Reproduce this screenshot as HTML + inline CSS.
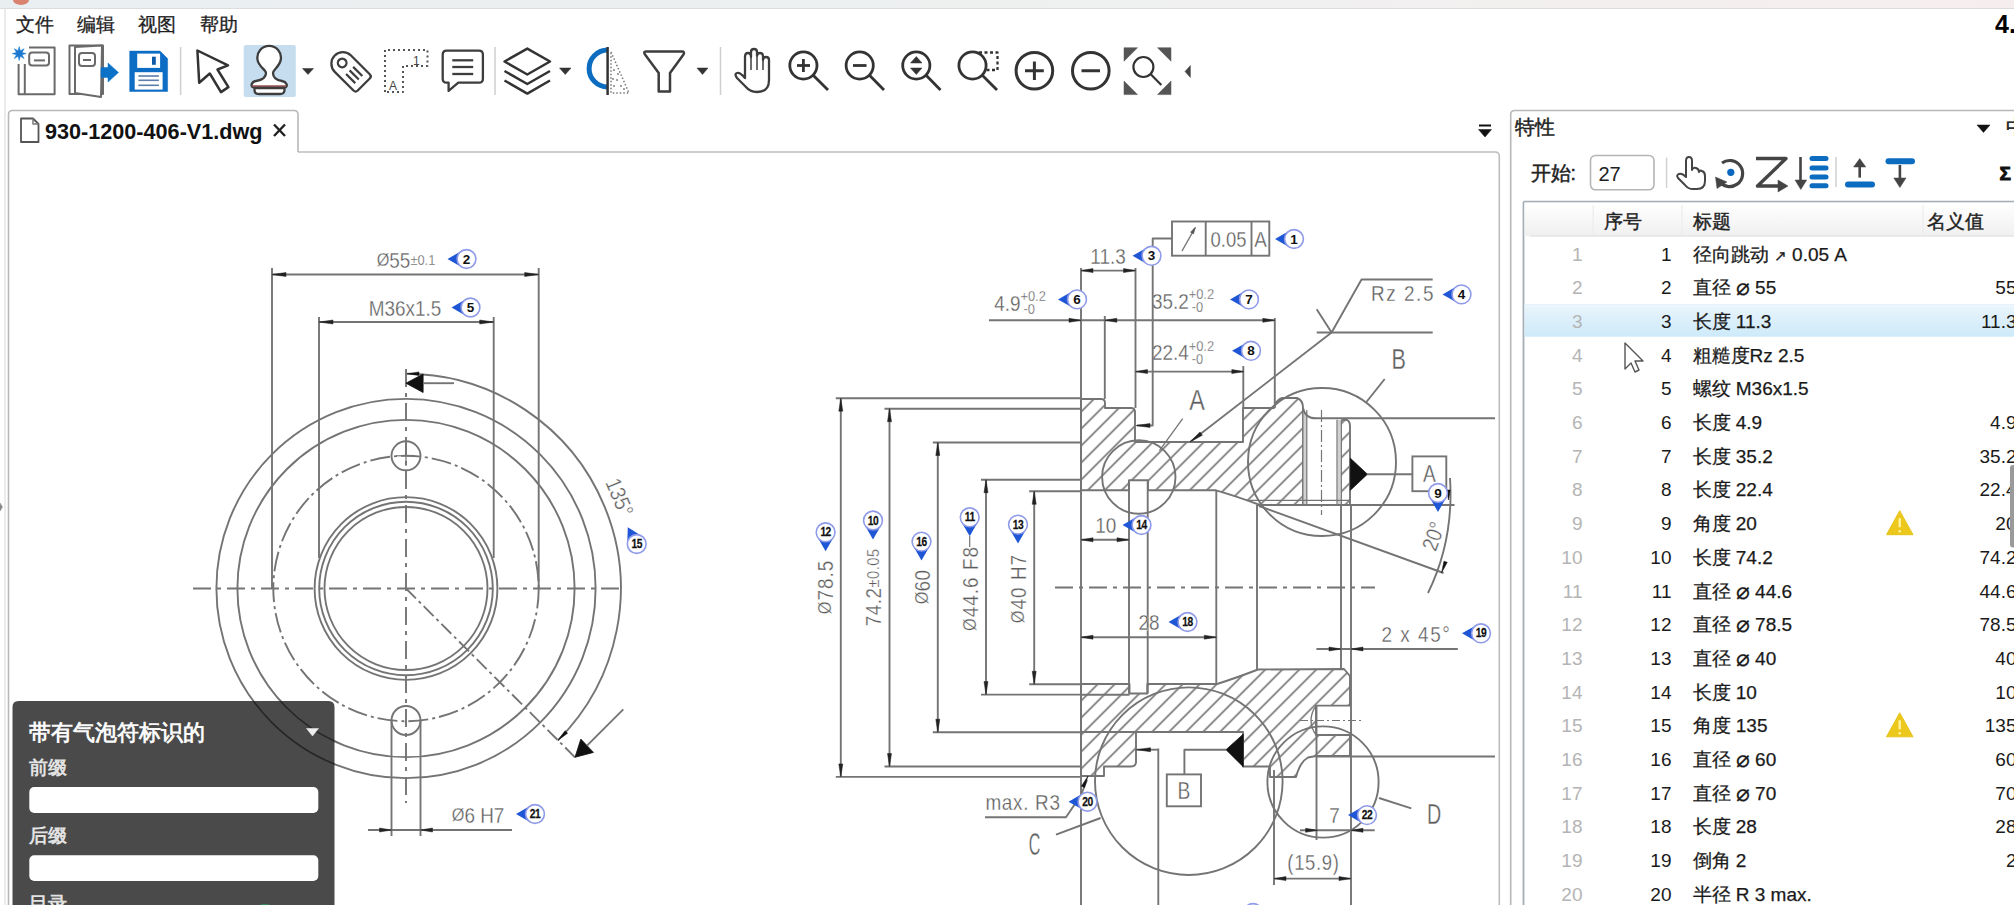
<!DOCTYPE html>
<html><head><meta charset="utf-8">
<style>
html,body{margin:0;padding:0;width:2014px;height:905px;overflow:hidden;background:#fff;font-family:"Liberation Sans",sans-serif;}
svg{position:absolute;left:0;top:0;}
</style></head>
<body>
<svg width="2014" height="905" viewBox="0 0 2014 905">
<defs>
<pattern id="hatch" patternUnits="userSpaceOnUse" width="12.02" height="12.02" patternTransform="rotate(-45)">
<line x1="-2" y1="9.9" x2="14" y2="9.9" stroke="#727272" stroke-width="1.65"/>
</pattern>
<linearGradient id="topband" x1="0" y1="0" x2="1" y2="0">
<stop offset="0" stop-color="#e9eef0"/><stop offset="0.5" stop-color="#eef0f0"/><stop offset="1" stop-color="#f6eeee"/>
</linearGradient>
<linearGradient id="hdr" x1="0" y1="0" x2="0" y2="1">
<stop offset="0" stop-color="#ffffff"/><stop offset="1" stop-color="#f0f0f0"/>
</linearGradient>
<linearGradient id="sel" x1="0" y1="0" x2="0" y2="1">
<stop offset="0" stop-color="#f2f9fd"/><stop offset="0.15" stop-color="#e6f3fb"/><stop offset="1" stop-color="#cdeafa"/>
</linearGradient>
</defs>
<line x1="193" y1="588.5" x2="620" y2="588.5" stroke="#747474" stroke-width="1.9" stroke-dasharray="18 6 4 6" stroke-linecap="butt"/>
<line x1="406" y1="369" x2="406" y2="803" stroke="#747474" stroke-width="1.9" stroke-dasharray="18 6 4 6" stroke-linecap="butt"/>
<circle cx="406" cy="588.5" r="189.6" fill="none" stroke="#747474" stroke-width="1.9"/>
<circle cx="406" cy="588.5" r="168.6" fill="none" stroke="#747474" stroke-width="1.9"/>
<circle cx="406" cy="588.5" r="132.7" fill="none" stroke="#747474" stroke-width="1.9" stroke-dasharray="20 4 3 4"/>
<circle cx="406" cy="588.5" r="91.4" fill="none" stroke="#747474" stroke-width="1.9"/>
<circle cx="406" cy="588.5" r="86.8" fill="none" stroke="#747474" stroke-width="1.9"/>
<circle cx="406" cy="588.5" r="81.5" fill="none" stroke="#747474" stroke-width="1.9"/>
<circle cx="406" cy="455.8" r="14.5" fill="none" stroke="#747474" stroke-width="1.9"/>
<line x1="396" y1="455.8" x2="415" y2="455.8" stroke="#747474" stroke-width="1.2" stroke-linecap="butt"/>
<line x1="406" y1="446" x2="406" y2="466" stroke="#747474" stroke-width="1.2" stroke-linecap="butt"/>
<circle cx="406" cy="720.5" r="14.5" fill="none" stroke="#747474" stroke-width="1.9"/>
<line x1="391.5" y1="720.5" x2="391.5" y2="836" stroke="#747474" stroke-width="1.9" stroke-linecap="butt"/>
<line x1="420.5" y1="720.5" x2="420.5" y2="836" stroke="#747474" stroke-width="1.9" stroke-linecap="butt"/>
<line x1="368" y1="830" x2="512" y2="830" stroke="#747474" stroke-width="1.9" stroke-linecap="butt"/>
<polygon points="391.5,830 379.5,832 379.5,828" fill="#222" stroke="#222" stroke-width="0.5" stroke-linejoin="round"/>
<polygon points="420.5,830 432.5,828 432.5,832" fill="#222" stroke="#222" stroke-width="0.5" stroke-linejoin="round"/>
<text transform="translate(478,815) scale(0.86,1)" font-family="Liberation Sans" font-size="22" fill="#5e5e5e" text-anchor="middle" font-weight="normal" dominant-baseline="central" stroke="#fff" stroke-width="0.3" ><tspan font-size="19">Ø</tspan>6 H7</text>
<line x1="272" y1="268" x2="272" y2="588.5" stroke="#747474" stroke-width="1.9" stroke-linecap="butt"/>
<line x1="538.7" y1="268" x2="538.7" y2="588.5" stroke="#747474" stroke-width="1.9" stroke-linecap="butt"/>
<line x1="272" y1="274.5" x2="538.7" y2="274.5" stroke="#747474" stroke-width="1.9" stroke-linecap="butt"/>
<polygon points="272,274.5 286,272.5 286,276.5" fill="#222" stroke="#222" stroke-width="0.5" stroke-linejoin="round"/>
<polygon points="538.7,274.5 524.7,276.5 524.7,272.5" fill="#222" stroke="#222" stroke-width="0.5" stroke-linejoin="round"/>
<text transform="translate(406,259.5) scale(0.86,1)" font-family="Liberation Sans" font-size="22" fill="#5e5e5e" text-anchor="middle" font-weight="normal" dominant-baseline="central" stroke="#fff" stroke-width="0.3" ><tspan font-size="19">Ø</tspan>55<tspan font-size="15">±0.1</tspan></text>
<line x1="319" y1="317" x2="319" y2="558" stroke="#747474" stroke-width="1.9" stroke-linecap="butt"/>
<line x1="493.7" y1="317" x2="493.7" y2="558" stroke="#747474" stroke-width="1.9" stroke-linecap="butt"/>
<line x1="319" y1="322" x2="493.7" y2="322" stroke="#747474" stroke-width="1.9" stroke-linecap="butt"/>
<polygon points="319,322 333,320 333,324" fill="#222" stroke="#222" stroke-width="0.5" stroke-linejoin="round"/>
<polygon points="493.7,322 479.7,324 479.7,320" fill="#222" stroke="#222" stroke-width="0.5" stroke-linejoin="round"/>
<text transform="translate(405,308) scale(0.86,1)" font-family="Liberation Sans" font-size="22" fill="#5e5e5e" text-anchor="middle" font-weight="normal" dominant-baseline="central" stroke="#fff" stroke-width="0.3" >M36x1.5</text>
<path d="M 406 373.7 A 214.8 214.8 0 0 1 557.89 740.39" fill="none" stroke="#747474" stroke-width="1.9" stroke-linejoin="round" />
<polygon points="407,373.7 419,371.95 419,375.45" fill="#111" stroke="#111" stroke-width="0.5" stroke-linejoin="round"/>
<polygon points="557.89,740.39 565.13,730.66 567.61,733.14" fill="#111" stroke="#111" stroke-width="0.5" stroke-linejoin="round"/>
<line x1="406" y1="588.5" x2="575" y2="757.3" stroke="#747474" stroke-width="1.9" stroke-dasharray="14 4 3 4" stroke-linecap="butt"/>
<polygon points="405.9,383.2 423.1,374 423.1,392.5" fill="#111" stroke="#111" stroke-width="0.8" stroke-linejoin="round"/>
<line x1="423" y1="383.2" x2="454" y2="383.2" stroke="#747474" stroke-width="1.9" stroke-linecap="butt"/>
<polygon points="575,757.3 580.8,739.1 593.5,752.4" fill="#111" stroke="#111" stroke-width="0.8" stroke-linejoin="round"/>
<line x1="587" y1="745.7" x2="623.3" y2="709.3" stroke="#747474" stroke-width="1.9" stroke-linecap="butt"/>
<text transform="translate(620,497) rotate(67) scale(0.86,1)" font-family="Liberation Sans" font-size="22" fill="#5e5e5e" text-anchor="middle" font-weight="normal" dominant-baseline="central" stroke="#fff" stroke-width="0.3" >135°</text>
<path d="M 1081 399 L 1101 399 Q 1105 399 1105 403 L 1105 408 L 1131 408 Q 1135 408 1135 412 L 1135 442 L 1243 442 L 1243 408 L 1274 408 Q 1276 400 1282 398 L 1297 398 Q 1303 400 1303 408 L 1303 505 L 1260 505 Q 1236 496 1216 490.3 L 1148 490.3 L 1148 480.3 L 1129 480.3 L 1129 490.3 L 1081 490.3 Z" fill="url(#hatch)" stroke="none"/>
<path d="M 1341 420 Q 1341 419.5 1345 419.5 Q 1350 420 1350 426 L 1350 505 L 1341 505 Z" fill="url(#hatch)" stroke="none"/>
<path d="M 1081 684 L 1129.5 684 L 1129.5 693.5 L 1147.3 693.5 L 1147.3 684 L 1217 684 Q 1236 678 1258 669.5 L 1344 669 L 1350 676 L 1350 705.6 L 1316 705.6 L 1316 735 L 1350 735 L 1350 756 L 1316 756 L 1308 757.5 Q 1300 762 1296 777 L 1270 777 L 1270 766.5 L 1243 766.5 L 1243 732 L 1136 732 L 1136 762 Q 1136 766.5 1131 766.5 L 1104 766.5 L 1104 776 L 1081 776 Z" fill="url(#hatch)" stroke="none"/>
<path d="M 1081 399 L 1101 399 Q 1105 399 1105 403 L 1105 408 L 1131 408 Q 1135 408 1135 412 L 1135 442 L 1243 442 L 1243 408 L 1274 408 Q 1276 400 1282 398 L 1297 398 Q 1303 400 1303 408 L 1303 505 L 1260 505 Q 1236 496 1216 490.3 L 1148 490.3 L 1148 480.3 L 1129 480.3 L 1129 490.3 L 1081 490.3 Z" fill="none" stroke="#747474" stroke-width="1.9" stroke-linejoin="round" />
<path d="M 1341 505 L 1341 421 Q 1342 419.5 1345 419.5 Q 1350 420 1350 426 L 1350 505" fill="none" stroke="#747474" stroke-width="1.9" stroke-linejoin="round" />
<rect x="1303.5" y="412" width="3.3" height="93" fill="#d0d0d0"/>
<rect x="1337.5" y="420" width="3.3" height="85" fill="#d0d0d0"/>
<line x1="1306.8" y1="410" x2="1306.8" y2="505" stroke="#747474" stroke-width="1.2" stroke-linecap="butt"/>
<line x1="1337" y1="419.8" x2="1337" y2="505" stroke="#747474" stroke-width="1.2" stroke-linecap="butt"/>
<path d="M 1303 408 Q 1305 418.3 1316 418.3 L 1495 418.3" fill="none" stroke="#747474" stroke-width="1.9" stroke-linejoin="round" />
<line x1="1246" y1="500.3" x2="1350" y2="500.3" stroke="#747474" stroke-width="1.2" stroke-linecap="butt"/>
<line x1="1258" y1="505" x2="1454.5" y2="505" stroke="#747474" stroke-width="1.9" stroke-linecap="butt"/>
<line x1="1321.5" y1="410" x2="1321.5" y2="515" stroke="#747474" stroke-width="1.2" stroke-dasharray="12 3 2 3" stroke-linecap="butt"/>
<path d="M 1081 684 L 1129.5 684 L 1129.5 693.5 L 1147.3 693.5 L 1147.3 684 L 1217 684 Q 1236 678 1258 669.5 L 1344 669 L 1350 676 L 1350 705.6 L 1316 705.6 L 1316 735 L 1350 735 L 1350 756 L 1316 756 L 1308 757.5 Q 1300 762 1296 777 L 1270 777 L 1270 766.5 L 1243 766.5 L 1243 732 L 1136 732 L 1136 762 Q 1136 766.5 1131 766.5 L 1104 766.5 L 1104 776 L 1081 776 Z" fill="none" stroke="#747474" stroke-width="1.9" stroke-linejoin="round" />
<line x1="1081" y1="732" x2="1136" y2="732" stroke="#747474" stroke-width="1.9" stroke-linecap="butt"/>
<line x1="1081" y1="694.7" x2="1129.5" y2="694.7" stroke="#747474" stroke-width="1.9" stroke-linecap="butt"/>
<line x1="1300" y1="720.5" x2="1362" y2="720.5" stroke="#747474" stroke-width="1.2" stroke-dasharray="8 3 2 3" stroke-linecap="butt"/>
<path d="M 1316 705.6 Q 1306 720.5 1316 735" fill="none" stroke="#747474" stroke-width="1.3" stroke-linejoin="round" />
<line x1="1316" y1="756.5" x2="1495" y2="756.5" stroke="#747474" stroke-width="1.9" stroke-linecap="butt"/>
<line x1="1081" y1="268" x2="1081" y2="905" stroke="#747474" stroke-width="1.9" stroke-linecap="butt"/>
<line x1="1104.8" y1="316" x2="1104.8" y2="399" stroke="#747474" stroke-width="1.9" stroke-linecap="butt"/>
<line x1="1135.5" y1="268" x2="1135.5" y2="408" stroke="#747474" stroke-width="1.9" stroke-linecap="butt"/>
<line x1="1274.8" y1="318" x2="1274.8" y2="408" stroke="#747474" stroke-width="1.9" stroke-linecap="butt"/>
<line x1="1243.3" y1="366" x2="1243.3" y2="408" stroke="#747474" stroke-width="1.9" stroke-linecap="butt"/>
<line x1="1129" y1="480.3" x2="1129" y2="693.5" stroke="#747474" stroke-width="1.9" stroke-linecap="butt"/>
<line x1="1147.7" y1="480.3" x2="1147.7" y2="693.5" stroke="#747474" stroke-width="1.9" stroke-linecap="butt"/>
<line x1="1216.3" y1="490.3" x2="1216.3" y2="684" stroke="#747474" stroke-width="1.9" stroke-linecap="butt"/>
<line x1="1257" y1="505" x2="1257" y2="669" stroke="#747474" stroke-width="1.9" stroke-linecap="butt"/>
<line x1="1341" y1="505" x2="1341" y2="669" stroke="#747474" stroke-width="1.9" stroke-linecap="butt"/>
<line x1="1351" y1="505" x2="1351" y2="905" stroke="#747474" stroke-width="1.9" stroke-linecap="butt"/>
<line x1="1316.5" y1="705.6" x2="1316.5" y2="840" stroke="#747474" stroke-width="1.9" stroke-linecap="butt"/>
<line x1="1158.3" y1="748.5" x2="1158.3" y2="905" stroke="#747474" stroke-width="1.9" stroke-linecap="butt"/>
<line x1="1274" y1="770" x2="1274" y2="885" stroke="#747474" stroke-width="1.9" stroke-linecap="butt"/>
<line x1="1055" y1="587.5" x2="1375" y2="587.5" stroke="#747474" stroke-width="1.9" stroke-dasharray="18 6 4 6" stroke-linecap="butt"/>
<line x1="835.8" y1="398.2" x2="1081" y2="398.2" stroke="#747474" stroke-width="1.9" stroke-linecap="butt"/>
<line x1="835.8" y1="776.9" x2="1081" y2="776.9" stroke="#747474" stroke-width="1.9" stroke-linecap="butt"/>
<line x1="840.8" y1="398.2" x2="840.8" y2="776.9" stroke="#747474" stroke-width="1.9" stroke-linecap="butt"/>
<polygon points="840.8,398.2 842.8,411.2 838.8,411.2" fill="#222" stroke="#222" stroke-width="0.5" stroke-linejoin="round"/>
<polygon points="840.8,776.9 838.8,763.9 842.8,763.9" fill="#222" stroke="#222" stroke-width="0.5" stroke-linejoin="round"/>
<line x1="884.5" y1="408.7" x2="1081" y2="408.7" stroke="#747474" stroke-width="1.9" stroke-linecap="butt"/>
<line x1="884.5" y1="766.5" x2="1081" y2="766.5" stroke="#747474" stroke-width="1.9" stroke-linecap="butt"/>
<line x1="889.5" y1="408.7" x2="889.5" y2="766.5" stroke="#747474" stroke-width="1.9" stroke-linecap="butt"/>
<polygon points="889.5,408.7 891.5,421.7 887.5,421.7" fill="#222" stroke="#222" stroke-width="0.5" stroke-linejoin="round"/>
<polygon points="889.5,766.5 887.5,753.5 891.5,753.5" fill="#222" stroke="#222" stroke-width="0.5" stroke-linejoin="round"/>
<line x1="932.8" y1="442.5" x2="1081" y2="442.5" stroke="#747474" stroke-width="1.9" stroke-linecap="butt"/>
<line x1="932.8" y1="732.2" x2="1081" y2="732.2" stroke="#747474" stroke-width="1.9" stroke-linecap="butt"/>
<line x1="937.8" y1="442.5" x2="937.8" y2="732.2" stroke="#747474" stroke-width="1.9" stroke-linecap="butt"/>
<polygon points="937.8,442.5 939.8,455.5 935.8,455.5" fill="#222" stroke="#222" stroke-width="0.5" stroke-linejoin="round"/>
<polygon points="937.8,732.2 935.8,719.2 939.8,719.2" fill="#222" stroke="#222" stroke-width="0.5" stroke-linejoin="round"/>
<line x1="981" y1="479.7" x2="1081" y2="479.7" stroke="#747474" stroke-width="1.9" stroke-linecap="butt"/>
<line x1="981" y1="694.6" x2="1081" y2="694.6" stroke="#747474" stroke-width="1.9" stroke-linecap="butt"/>
<line x1="986" y1="479.7" x2="986" y2="694.6" stroke="#747474" stroke-width="1.9" stroke-linecap="butt"/>
<polygon points="986,479.7 988,492.7 984,492.7" fill="#222" stroke="#222" stroke-width="0.5" stroke-linejoin="round"/>
<polygon points="986,694.6 984,681.6 988,681.6" fill="#222" stroke="#222" stroke-width="0.5" stroke-linejoin="round"/>
<line x1="1029.2" y1="491.3" x2="1081" y2="491.3" stroke="#747474" stroke-width="1.9" stroke-linecap="butt"/>
<line x1="1029.2" y1="684.3" x2="1081" y2="684.3" stroke="#747474" stroke-width="1.9" stroke-linecap="butt"/>
<line x1="1034.2" y1="491.3" x2="1034.2" y2="684.3" stroke="#747474" stroke-width="1.9" stroke-linecap="butt"/>
<polygon points="1034.2,491.3 1036.2,504.3 1032.2,504.3" fill="#222" stroke="#222" stroke-width="0.5" stroke-linejoin="round"/>
<polygon points="1034.2,684.3 1032.2,671.3 1036.2,671.3" fill="#222" stroke="#222" stroke-width="0.5" stroke-linejoin="round"/>
<text transform="translate(825,587) rotate(-90) scale(0.86,1)" font-family="Liberation Sans" font-size="22" fill="#5e5e5e" text-anchor="middle" font-weight="normal" dominant-baseline="central" stroke="#fff" stroke-width="0.3" letter-spacing="1.2"><tspan font-size="19">Ø</tspan>78.5</text>
<text transform="translate(873,587.4) rotate(-90) scale(0.86,1)" font-family="Liberation Sans" font-size="22" fill="#5e5e5e" text-anchor="middle" font-weight="normal" dominant-baseline="central" stroke="#fff" stroke-width="0.3" letter-spacing="0.6">74.2<tspan font-size="17">±0.05</tspan></text>
<text transform="translate(921.7,587.1) rotate(-90) scale(0.86,1)" font-family="Liberation Sans" font-size="22" fill="#5e5e5e" text-anchor="middle" font-weight="normal" dominant-baseline="central" stroke="#fff" stroke-width="0.3" letter-spacing="0.3"><tspan font-size="19">Ø</tspan>60</text>
<text transform="translate(970,588.5) rotate(-90) scale(0.86,1)" font-family="Liberation Sans" font-size="22" fill="#5e5e5e" text-anchor="middle" font-weight="normal" dominant-baseline="central" stroke="#fff" stroke-width="0.3" letter-spacing="1.2"><tspan font-size="19">Ø</tspan>44.6 F8</text>
<text transform="translate(1018,588.5) rotate(-90) scale(0.86,1)" font-family="Liberation Sans" font-size="22" fill="#5e5e5e" text-anchor="middle" font-weight="normal" dominant-baseline="central" stroke="#fff" stroke-width="0.3" letter-spacing="1.2"><tspan font-size="19">Ø</tspan>40 H7</text>
<line x1="969.7" y1="536" x2="969.7" y2="547" stroke="#747474" stroke-width="1.2" stroke-linecap="butt"/>
<line x1="1081" y1="270.6" x2="1135.5" y2="270.6" stroke="#747474" stroke-width="1.9" stroke-linecap="butt"/>
<polygon points="1081,270.6 1093,268.6 1093,272.6" fill="#222" stroke="#222" stroke-width="0.5" stroke-linejoin="round"/>
<polygon points="1135.5,270.6 1123.5,272.6 1123.5,268.6" fill="#222" stroke="#222" stroke-width="0.5" stroke-linejoin="round"/>
<text transform="translate(1108,255.7) scale(0.86,1)" font-family="Liberation Sans" font-size="22" fill="#5e5e5e" text-anchor="middle" font-weight="normal" dominant-baseline="central" stroke="#fff" stroke-width="0.3" >11.3</text>
<line x1="989" y1="320.3" x2="1275" y2="320.3" stroke="#747474" stroke-width="1.9" stroke-linecap="butt"/>
<polygon points="1081,320.3 1069,322.3 1069,318.3" fill="#222" stroke="#222" stroke-width="0.5" stroke-linejoin="round"/>
<polygon points="1104.8,320.3 1116.8,318.3 1116.8,322.3" fill="#222" stroke="#222" stroke-width="0.5" stroke-linejoin="round"/>
<polygon points="1274.8,320.3 1262.8,322.3 1262.8,318.3" fill="#222" stroke="#222" stroke-width="0.5" stroke-linejoin="round"/>
<text transform="translate(1020,303) scale(0.86,1)" font-family="Liberation Sans" font-size="22" fill="#5e5e5e" text-anchor="middle" font-weight="normal" dominant-baseline="central" stroke="#fff" stroke-width="0.3" >4.9<tspan font-size="15" dy="-7">+0.2</tspan><tspan font-size="15" dx="-26" dy="13">-0</tspan></text>
<text transform="translate(1183,301) scale(0.86,1)" font-family="Liberation Sans" font-size="22" fill="#5e5e5e" text-anchor="middle" font-weight="normal" dominant-baseline="central" stroke="#fff" stroke-width="0.3" >35.2<tspan font-size="15" dy="-7">+0.2</tspan><tspan font-size="15" dx="-26" dy="13">-0</tspan></text>
<line x1="1135.5" y1="371.6" x2="1243.8" y2="371.6" stroke="#747474" stroke-width="1.9" stroke-linecap="butt"/>
<polygon points="1135.5,371.6 1147.5,369.6 1147.5,373.6" fill="#222" stroke="#222" stroke-width="0.5" stroke-linejoin="round"/>
<polygon points="1243.8,371.6 1231.8,373.6 1231.8,369.6" fill="#222" stroke="#222" stroke-width="0.5" stroke-linejoin="round"/>
<text transform="translate(1183,352.4) scale(0.86,1)" font-family="Liberation Sans" font-size="22" fill="#5e5e5e" text-anchor="middle" font-weight="normal" dominant-baseline="central" stroke="#fff" stroke-width="0.3" >22.4<tspan font-size="15" dy="-7">+0.2</tspan><tspan font-size="15" dx="-26" dy="13">-0</tspan></text>
<polyline points="1172,238.5 1152.7,238.5 1152.7,425.5 1137,425.5" fill="none" stroke="#747474" stroke-width="1.9" stroke-linejoin="round"/>
<polygon points="1136,425.5 1150,423.5 1150,427.5" fill="#222" stroke="#222" stroke-width="0.5" stroke-linejoin="round"/>
<rect x="1172" y="221.5" width="97.3" height="34.2" fill="none" stroke="#747474" stroke-width="1.9"/>
<line x1="1205.7" y1="221.5" x2="1205.7" y2="255.7" stroke="#747474" stroke-width="1.9" stroke-linecap="butt"/>
<line x1="1251.5" y1="221.5" x2="1251.5" y2="255.7" stroke="#747474" stroke-width="1.9" stroke-linecap="butt"/>
<line x1="1182" y1="251" x2="1195" y2="228" stroke="#747474" stroke-width="1.4" stroke-linecap="butt"/>
<polygon points="1195.5,227 1193.52,233.94 1190.48,232.19" fill="#555" stroke="#555" stroke-width="0.5" stroke-linejoin="round"/>
<text transform="translate(1228.5,239) scale(0.84,1)" font-family="Liberation Sans" font-size="22" fill="#5e5e5e" text-anchor="middle" font-weight="normal" dominant-baseline="central" stroke="#fff" stroke-width="0.3" >0.05</text>
<text transform="translate(1260.5,239) scale(0.86,1)" font-family="Liberation Sans" font-size="22" fill="#5e5e5e" text-anchor="middle" font-weight="normal" dominant-baseline="central" stroke="#fff" stroke-width="0.3" >A</text>
<polyline points="1432.7,279.5 1361.5,279.5 1331.6,332.5 1316.7,309.3" fill="none" stroke="#747474" stroke-width="1.9" stroke-linejoin="round"/>
<line x1="1316.7" y1="332.5" x2="1432.7" y2="332.5" stroke="#747474" stroke-width="1.9" stroke-linecap="butt"/>
<line x1="1331.6" y1="332.5" x2="1190" y2="442" stroke="#747474" stroke-width="1.9" stroke-linecap="butt"/>
<polygon points="1190,442 1199.98,431.98 1202.38,435.17" fill="#222" stroke="#222" stroke-width="0.5" stroke-linejoin="round"/>
<line x1="1159.4" y1="450.7" x2="1182.7" y2="418.7" stroke="#747474" stroke-width="1.3" stroke-linecap="butt"/>
<text transform="translate(1403,293.4) scale(0.86,1)" font-family="Liberation Sans" font-size="22" fill="#5e5e5e" text-anchor="middle" font-weight="normal" dominant-baseline="central" stroke="#fff" stroke-width="0.3" letter-spacing="1.8">Rz 2.5</text>
<text transform="translate(1398.7,359) scale(0.72,1)" font-family="Liberation Sans" font-size="30" fill="#5e5e5e" text-anchor="middle" font-weight="normal" dominant-baseline="central" stroke="#fff" stroke-width="0.3" >B</text>
<line x1="1384.7" y1="379" x2="1366.4" y2="402" stroke="#747474" stroke-width="1.9" stroke-linecap="butt"/>
<text transform="translate(1197,399.6) scale(0.78,1)" font-family="Liberation Sans" font-size="30" fill="#5e5e5e" text-anchor="middle" font-weight="normal" dominant-baseline="central" stroke="#fff" stroke-width="0.3" >A</text>
<circle cx="1138.8" cy="477" r="36.7" fill="none" stroke="#747474" stroke-width="1.9"/>
<circle cx="1322" cy="462" r="74" fill="none" stroke="#747474" stroke-width="1.9"/>
<circle cx="1188.8" cy="781.2" r="93.8" fill="none" stroke="#747474" stroke-width="1.9"/>
<circle cx="1323" cy="782" r="55.6" fill="none" stroke="#747474" stroke-width="1.9"/>
<polygon points="1350.4,458.3 1367.4,474.2 1350.4,490.2" fill="#111" stroke="#111" stroke-width="0.8" stroke-linejoin="round"/>
<line x1="1367" y1="474.2" x2="1412.4" y2="474.2" stroke="#747474" stroke-width="1.9" stroke-linecap="butt"/>
<rect x="1412.4" y="456.4" width="33.9" height="34.8" fill="none" stroke="#747474" stroke-width="1.9"/>
<text transform="translate(1429.3,474) scale(0.8,1)" font-family="Liberation Sans" font-size="24" fill="#5e5e5e" text-anchor="middle" font-weight="normal" dominant-baseline="central" stroke="#fff" stroke-width="0.3" >A</text>
<line x1="1259" y1="506" x2="1443.5" y2="573" stroke="#747474" stroke-width="1.9" stroke-linecap="butt"/>
<path d="M 1450 478 Q 1454 540 1428 593" fill="none" stroke="#747474" stroke-width="1.9" stroke-linejoin="round" />
<polygon points="1448.5,500 1446.75,490 1450.25,490" fill="#111" stroke="#111" stroke-width="0.5" stroke-linejoin="round"/>
<polygon points="1441.5,573 1443.96,561.13 1447.25,562.32" fill="#111" stroke="#111" stroke-width="0.5" stroke-linejoin="round"/>
<text transform="translate(1433,536) rotate(-70) scale(0.86,1)" font-family="Liberation Sans" font-size="22" fill="#5e5e5e" text-anchor="middle" font-weight="normal" dominant-baseline="central" stroke="#fff" stroke-width="0.3" >20°</text>
<line x1="1316.4" y1="649" x2="1457.8" y2="649" stroke="#747474" stroke-width="1.9" stroke-linecap="butt"/>
<polygon points="1341,649 1329,651 1329,647" fill="#222" stroke="#222" stroke-width="0.5" stroke-linejoin="round"/>
<polygon points="1351,649 1363,647 1363,651" fill="#222" stroke="#222" stroke-width="0.5" stroke-linejoin="round"/>
<text transform="translate(1416.4,633.6) scale(0.86,1)" font-family="Liberation Sans" font-size="22" fill="#5e5e5e" text-anchor="middle" font-weight="normal" dominant-baseline="central" stroke="#fff" stroke-width="0.3" letter-spacing="1.8">2 x 45°</text>
<line x1="1081" y1="539.8" x2="1129" y2="539.8" stroke="#747474" stroke-width="1.9" stroke-linecap="butt"/>
<polygon points="1081,539.8 1093,537.8 1093,541.8" fill="#222" stroke="#222" stroke-width="0.5" stroke-linejoin="round"/>
<polygon points="1129,539.8 1117,541.8 1117,537.8" fill="#222" stroke="#222" stroke-width="0.5" stroke-linejoin="round"/>
<text transform="translate(1105.7,525) scale(0.86,1)" font-family="Liberation Sans" font-size="22" fill="#5e5e5e" text-anchor="middle" font-weight="normal" dominant-baseline="central" stroke="#fff" stroke-width="0.3" >10</text>
<line x1="1081" y1="637.2" x2="1216.3" y2="637.2" stroke="#747474" stroke-width="1.9" stroke-linecap="butt"/>
<polygon points="1081,637.2 1093,635.2 1093,639.2" fill="#222" stroke="#222" stroke-width="0.5" stroke-linejoin="round"/>
<polygon points="1216.3,637.2 1204.3,639.2 1204.3,635.2" fill="#222" stroke="#222" stroke-width="0.5" stroke-linejoin="round"/>
<text transform="translate(1149,622) scale(0.86,1)" font-family="Liberation Sans" font-size="22" fill="#5e5e5e" text-anchor="middle" font-weight="normal" dominant-baseline="central" stroke="#fff" stroke-width="0.3" >28</text>
<polygon points="1226,749.7 1243.2,734.2 1243.2,766.7" fill="#111" stroke="#111" stroke-width="0.8" stroke-linejoin="round"/>
<polyline points="1226,749.7 1184.4,749.7 1184.4,774.4" fill="none" stroke="#747474" stroke-width="1.9" stroke-linejoin="round"/>
<rect x="1166.8" y="774.4" width="34.2" height="31.9" fill="none" stroke="#747474" stroke-width="1.9"/>
<text transform="translate(1184,790.5) scale(0.8,1)" font-family="Liberation Sans" font-size="24" fill="#5e5e5e" text-anchor="middle" font-weight="normal" dominant-baseline="central" stroke="#fff" stroke-width="0.3" >B</text>
<polyline points="1136.5,749.7 1158.3,749.7" fill="none" stroke="#747474" stroke-width="1.9" stroke-linejoin="round"/>
<polygon points="1136.5,749.7 1150.5,747.7 1150.5,751.7" fill="#222" stroke="#222" stroke-width="0.5" stroke-linejoin="round"/>
<text transform="translate(1023,802) scale(0.86,1)" font-family="Liberation Sans" font-size="22" fill="#5e5e5e" text-anchor="middle" font-weight="normal" dominant-baseline="central" stroke="#fff" stroke-width="0.3" letter-spacing="0.8">max. R3</text>
<polyline points="985,817.2 1066,817.2 1081,795 1087,780" fill="none" stroke="#747474" stroke-width="1.9" stroke-linejoin="round"/>
<polygon points="1088,776 1084.51,787.62 1081.34,786.14" fill="#111" stroke="#111" stroke-width="0.5" stroke-linejoin="round"/>
<text transform="translate(1034.5,844.2) scale(0.52,1)" font-family="Liberation Sans" font-size="31" fill="#5e5e5e" text-anchor="middle" font-weight="normal" dominant-baseline="central" stroke="#fff" stroke-width="0.3" >C</text>
<line x1="1056" y1="834.6" x2="1100.6" y2="818" stroke="#747474" stroke-width="1.9" stroke-linecap="butt"/>
<line x1="1379" y1="798" x2="1411.3" y2="808.4" stroke="#747474" stroke-width="1.9" stroke-linecap="butt"/>
<text transform="translate(1434.2,814.5) scale(0.68,1)" font-family="Liberation Sans" font-size="29" fill="#5e5e5e" text-anchor="middle" font-weight="normal" dominant-baseline="central" stroke="#fff" stroke-width="0.3" >D</text>
<line x1="1300" y1="830.3" x2="1374.7" y2="830.3" stroke="#747474" stroke-width="1.9" stroke-linecap="butt"/>
<polygon points="1317.6,830.3 1305.6,832.3 1305.6,828.3" fill="#222" stroke="#222" stroke-width="0.5" stroke-linejoin="round"/>
<polygon points="1351,830.3 1363,828.3 1363,832.3" fill="#222" stroke="#222" stroke-width="0.5" stroke-linejoin="round"/>
<text transform="translate(1334.5,815) scale(0.86,1)" font-family="Liberation Sans" font-size="22" fill="#5e5e5e" text-anchor="middle" font-weight="normal" dominant-baseline="central" stroke="#fff" stroke-width="0.3" >7</text>
<line x1="1274" y1="878.6" x2="1351" y2="878.6" stroke="#747474" stroke-width="1.9" stroke-linecap="butt"/>
<polygon points="1274,878.6 1286,876.6 1286,880.6" fill="#222" stroke="#222" stroke-width="0.5" stroke-linejoin="round"/>
<polygon points="1351,878.6 1339,880.6 1339,876.6" fill="#222" stroke="#222" stroke-width="0.5" stroke-linejoin="round"/>
<text transform="translate(1313.5,862.5) scale(0.84,1)" font-family="Liberation Sans" font-size="22" fill="#5e5e5e" text-anchor="middle" font-weight="normal" dominant-baseline="central" stroke="#fff" stroke-width="0.3" letter-spacing="0.8">(15.9)</text>
<text transform="translate(1212,912) scale(0.86,1)" font-family="Liberation Sans" font-size="22" fill="#5e5e5e" text-anchor="middle" font-weight="normal" dominant-baseline="central" stroke="#fff" stroke-width="0.3" >56</text>
<polygon points="516,814 530.35,805.83 535,814 530.35,822.17" fill="#1f56d6"/>
<circle cx="535" cy="814" r="9.4" fill="#fff" stroke="#8f9ae8" stroke-width="1.6"/>
<text transform="translate(535,818) scale(0.82,1)" font-family="Liberation Sans" font-size="12.5" font-weight="bold" fill="#111" text-anchor="middle" letter-spacing="-0.6" stroke="#111" stroke-width="0.25">21</text>
<polygon points="447.5,259 461.85,250.83 466.5,259 461.85,267.17" fill="#1f56d6"/>
<circle cx="466.5" cy="259" r="9.4" fill="#fff" stroke="#8f9ae8" stroke-width="1.6"/>
<text x="466.5" y="263.6" font-family="Liberation Sans" font-size="13.5" font-weight="bold" fill="#111" text-anchor="middle">2</text>
<polygon points="451.5,307.5 465.85,299.33 470.5,307.5 465.85,315.67" fill="#1f56d6"/>
<circle cx="470.5" cy="307.5" r="9.4" fill="#fff" stroke="#8f9ae8" stroke-width="1.6"/>
<text x="470.5" y="312.1" font-family="Liberation Sans" font-size="13.5" font-weight="bold" fill="#111" text-anchor="middle">5</text>
<polygon points="627.78,527.22 641.73,536.06 636.7,544 627.3,543.73" fill="#1f56d6"/>
<circle cx="636.7" cy="544" r="9.4" fill="#fff" stroke="#8f9ae8" stroke-width="1.6"/>
<text transform="translate(636.7,548) scale(0.82,1)" font-family="Liberation Sans" font-size="12.5" font-weight="bold" fill="#111" text-anchor="middle" letter-spacing="-0.6" stroke="#111" stroke-width="0.25">15</text>
<polygon points="825.6,551.3 817.43,536.95 825.6,532.3 833.77,536.95" fill="#1f56d6"/>
<circle cx="825.6" cy="532.3" r="9.4" fill="#fff" stroke="#8f9ae8" stroke-width="1.6"/>
<text transform="translate(825.6,536.3) scale(0.82,1)" font-family="Liberation Sans" font-size="12.5" font-weight="bold" fill="#111" text-anchor="middle" letter-spacing="-0.6" stroke="#111" stroke-width="0.25">12</text>
<polygon points="873,539.5 864.83,525.15 873,520.5 881.17,525.15" fill="#1f56d6"/>
<circle cx="873" cy="520.5" r="9.4" fill="#fff" stroke="#8f9ae8" stroke-width="1.6"/>
<text transform="translate(873,524.5) scale(0.82,1)" font-family="Liberation Sans" font-size="12.5" font-weight="bold" fill="#111" text-anchor="middle" letter-spacing="-0.6" stroke="#111" stroke-width="0.25">10</text>
<polygon points="921.5,560.6 913.33,546.25 921.5,541.6 929.67,546.25" fill="#1f56d6"/>
<circle cx="921.5" cy="541.6" r="9.4" fill="#fff" stroke="#8f9ae8" stroke-width="1.6"/>
<text transform="translate(921.5,545.6) scale(0.82,1)" font-family="Liberation Sans" font-size="12.5" font-weight="bold" fill="#111" text-anchor="middle" letter-spacing="-0.6" stroke="#111" stroke-width="0.25">16</text>
<polygon points="969.7,536.3 961.53,521.95 969.7,517.3 977.87,521.95" fill="#1f56d6"/>
<circle cx="969.7" cy="517.3" r="9.4" fill="#fff" stroke="#8f9ae8" stroke-width="1.6"/>
<text transform="translate(969.7,521.3) scale(0.82,1)" font-family="Liberation Sans" font-size="12.5" font-weight="bold" fill="#111" text-anchor="middle" letter-spacing="-0.6" stroke="#111" stroke-width="0.25">11</text>
<polygon points="1018,543.6 1009.83,529.25 1018,524.6 1026.17,529.25" fill="#1f56d6"/>
<circle cx="1018" cy="524.6" r="9.4" fill="#fff" stroke="#8f9ae8" stroke-width="1.6"/>
<text transform="translate(1018,528.6) scale(0.82,1)" font-family="Liberation Sans" font-size="12.5" font-weight="bold" fill="#111" text-anchor="middle" letter-spacing="-0.6" stroke="#111" stroke-width="0.25">13</text>
<polygon points="1132.5,255.8 1146.85,247.63 1151.5,255.8 1146.85,263.97" fill="#1f56d6"/>
<circle cx="1151.5" cy="255.8" r="9.4" fill="#fff" stroke="#8f9ae8" stroke-width="1.6"/>
<text x="1151.5" y="260.4" font-family="Liberation Sans" font-size="13.5" font-weight="bold" fill="#111" text-anchor="middle">3</text>
<polygon points="1058,299.4 1072.35,291.23 1077,299.4 1072.35,307.57" fill="#1f56d6"/>
<circle cx="1077" cy="299.4" r="9.4" fill="#fff" stroke="#8f9ae8" stroke-width="1.6"/>
<text x="1077" y="304" font-family="Liberation Sans" font-size="13.5" font-weight="bold" fill="#111" text-anchor="middle">6</text>
<polygon points="1230,299.4 1244.35,291.23 1249,299.4 1244.35,307.57" fill="#1f56d6"/>
<circle cx="1249" cy="299.4" r="9.4" fill="#fff" stroke="#8f9ae8" stroke-width="1.6"/>
<text x="1249" y="304" font-family="Liberation Sans" font-size="13.5" font-weight="bold" fill="#111" text-anchor="middle">7</text>
<polygon points="1232,350.8 1246.35,342.63 1251,350.8 1246.35,358.97" fill="#1f56d6"/>
<circle cx="1251" cy="350.8" r="9.4" fill="#fff" stroke="#8f9ae8" stroke-width="1.6"/>
<text x="1251" y="355.4" font-family="Liberation Sans" font-size="13.5" font-weight="bold" fill="#111" text-anchor="middle">8</text>
<polygon points="1275,239 1289.35,230.83 1294,239 1289.35,247.17" fill="#1f56d6"/>
<circle cx="1294" cy="239" r="9.4" fill="#fff" stroke="#8f9ae8" stroke-width="1.6"/>
<text x="1294" y="243.6" font-family="Liberation Sans" font-size="13.5" font-weight="bold" fill="#111" text-anchor="middle">1</text>
<polygon points="1442.5,294.4 1456.85,286.23 1461.5,294.4 1456.85,302.57" fill="#1f56d6"/>
<circle cx="1461.5" cy="294.4" r="9.4" fill="#fff" stroke="#8f9ae8" stroke-width="1.6"/>
<text x="1461.5" y="299" font-family="Liberation Sans" font-size="13.5" font-weight="bold" fill="#111" text-anchor="middle">4</text>
<polygon points="1438,512 1429.83,497.65 1438,493 1446.17,497.65" fill="#1f56d6"/>
<circle cx="1438" cy="493" r="9.4" fill="#fff" stroke="#8f9ae8" stroke-width="1.6"/>
<text x="1438" y="497.6" font-family="Liberation Sans" font-size="13.5" font-weight="bold" fill="#111" text-anchor="middle">9</text>
<polygon points="1462,633.3 1476.35,625.13 1481,633.3 1476.35,641.47" fill="#1f56d6"/>
<circle cx="1481" cy="633.3" r="9.4" fill="#fff" stroke="#8f9ae8" stroke-width="1.6"/>
<text transform="translate(1481,637.3) scale(0.82,1)" font-family="Liberation Sans" font-size="12.5" font-weight="bold" fill="#111" text-anchor="middle" letter-spacing="-0.6" stroke="#111" stroke-width="0.25">19</text>
<polygon points="1122.5,525 1136.85,516.83 1141.5,525 1136.85,533.17" fill="#1f56d6"/>
<circle cx="1141.5" cy="525" r="9.4" fill="#fff" stroke="#8f9ae8" stroke-width="1.6"/>
<text transform="translate(1141.5,529) scale(0.82,1)" font-family="Liberation Sans" font-size="12.5" font-weight="bold" fill="#111" text-anchor="middle" letter-spacing="-0.6" stroke="#111" stroke-width="0.25">14</text>
<polygon points="1168.5,622 1182.85,613.83 1187.5,622 1182.85,630.17" fill="#1f56d6"/>
<circle cx="1187.5" cy="622" r="9.4" fill="#fff" stroke="#8f9ae8" stroke-width="1.6"/>
<text transform="translate(1187.5,626) scale(0.82,1)" font-family="Liberation Sans" font-size="12.5" font-weight="bold" fill="#111" text-anchor="middle" letter-spacing="-0.6" stroke="#111" stroke-width="0.25">18</text>
<polygon points="1068.5,801.7 1082.85,793.53 1087.5,801.7 1082.85,809.87" fill="#1f56d6"/>
<circle cx="1087.5" cy="801.7" r="9.4" fill="#fff" stroke="#8f9ae8" stroke-width="1.6"/>
<text transform="translate(1087.5,805.7) scale(0.82,1)" font-family="Liberation Sans" font-size="12.5" font-weight="bold" fill="#111" text-anchor="middle" letter-spacing="-0.6" stroke="#111" stroke-width="0.25">20</text>
<polygon points="1348,815.1 1362.35,806.93 1367,815.1 1362.35,823.27" fill="#1f56d6"/>
<circle cx="1367" cy="815.1" r="9.4" fill="#fff" stroke="#8f9ae8" stroke-width="1.6"/>
<text transform="translate(1367,819.1) scale(0.82,1)" font-family="Liberation Sans" font-size="12.5" font-weight="bold" fill="#111" text-anchor="middle" letter-spacing="-0.6" stroke="#111" stroke-width="0.25">22</text>
<polygon points="1234,913 1248.35,904.83 1253,913 1248.35,921.17" fill="#1f56d6"/>
<circle cx="1253" cy="913" r="9.4" fill="#fff" stroke="#8f9ae8" stroke-width="1.6"/>
<text transform="translate(1253,917) scale(0.82,1)" font-family="Liberation Sans" font-size="12.5" font-weight="bold" fill="#111" text-anchor="middle" letter-spacing="-0.6" stroke="#111" stroke-width="0.25">23</text>
<rect x="0" y="0" width="2014" height="9" rx="0" fill="url(#topband)" stroke="none" stroke-width="1"/>
<line x1="0" y1="8.5" x2="2014" y2="8.5" stroke="#dcdcdc" stroke-width="1" stroke-linecap="butt"/>
<ellipse cx="21" cy="0" rx="8" ry="5" fill="#d9836f"/>
<line x1="5" y1="9" x2="5" y2="905" stroke="#dedede" stroke-width="1.2" stroke-linecap="butt"/>
<text x="16.3" y="31" font-family="Liberation Sans" font-size="19" fill="#1e1e1e" text-anchor="start" font-weight="normal" stroke="#1e1e1e" stroke-width="0.3" >文件</text>
<text x="76.5" y="31" font-family="Liberation Sans" font-size="19" fill="#1e1e1e" text-anchor="start" font-weight="normal" stroke="#1e1e1e" stroke-width="0.3" >编辑</text>
<text x="138.3" y="31" font-family="Liberation Sans" font-size="19" fill="#1e1e1e" text-anchor="start" font-weight="normal" stroke="#1e1e1e" stroke-width="0.3" >视图</text>
<text x="200" y="31" font-family="Liberation Sans" font-size="19" fill="#1e1e1e" text-anchor="start" font-weight="normal" stroke="#1e1e1e" stroke-width="0.3" >帮助</text>
<text x="1995" y="33" font-family="Liberation Sans" font-size="25" fill="#000" text-anchor="start" font-weight="bold" >4.</text>
<path d="M 29 47.4 L 54.6 47.4 L 54.6 94.3 L 18.6 94.3 L 18.6 64" fill="#fff" stroke="#6a6a6a" stroke-width="2" stroke-linejoin="round" />
<line x1="24.8" y1="64" x2="24.8" y2="94.3" stroke="#6a6a6a" stroke-width="2" stroke-linecap="butt"/>
<rect x="29.2" y="52.4" width="19.8" height="13" rx="3" fill="#fff" stroke="#6a6a6a" stroke-width="2"/>
<line x1="34" y1="60.4" x2="45" y2="60.4" stroke="#6a6a6a" stroke-width="2" stroke-linecap="butt"/>
<polygon points="26.2,53.6 21.97,54.75 24.15,58.55 20.35,56.37 19.2,60.6 18.05,56.37 14.25,58.55 16.43,54.75 12.2,53.6 16.43,52.45 14.25,48.65 18.05,50.83 19.2,46.6 20.35,50.83 24.15,48.65 21.97,52.45" fill="#1a78d0" stroke="#1a78d0" stroke-width="0.5" stroke-linejoin="round"/>
<path d="M 69.5 45.5 L 103 45.5 L 103 94 L 69.5 94 Z" fill="#fff" stroke="#6a6a6a" stroke-width="2" stroke-linejoin="round" />
<path d="M 75 47 L 102 45.5 L 101 97 L 75 93 Z" fill="#fff" stroke="#6a6a6a" stroke-width="2" stroke-linejoin="round" />
<rect x="79" y="53" width="16" height="13" rx="3" fill="#fff" stroke="#6a6a6a" stroke-width="2"/>
<line x1="83" y1="60" x2="91" y2="60" stroke="#6a6a6a" stroke-width="2" stroke-linecap="butt"/>
<polygon points="101,67.5 108,67.5 108,63 118.5,72.5 108,82 108,77.5 101,77.5" fill="#0b72c8" stroke="#0b72c8" stroke-width="0.5" stroke-linejoin="round"/>
<polygon points="129.7,51.1 160,51.1 167.6,58.6 167.6,91.5 129.7,91.5" fill="#0d6cc4" stroke="#0d6cc4" stroke-width="0.5" stroke-linejoin="round"/>
<rect x="137.2" y="53.6" width="22.9" height="14.3" rx="0" fill="#fff" stroke="none" stroke-width="1"/>
<rect x="152" y="56.7" width="3.8" height="8.1" rx="0" fill="#0d5aa8" stroke="none" stroke-width="1"/>
<rect x="134.7" y="72.2" width="27.9" height="17.4" rx="0" fill="#fff" stroke="none" stroke-width="1"/>
<line x1="138.4" y1="76" x2="158.9" y2="76" stroke="#5a7fa8" stroke-width="1.6" stroke-linecap="butt"/>
<line x1="138.4" y1="80.3" x2="158.9" y2="80.3" stroke="#5a7fa8" stroke-width="1.6" stroke-linecap="butt"/>
<line x1="138.4" y1="85.3" x2="158.9" y2="85.3" stroke="#5a7fa8" stroke-width="1.6" stroke-linecap="butt"/>
<line x1="180.6" y1="47" x2="180.6" y2="95" stroke="#cfcfcf" stroke-width="1.5" stroke-linecap="butt"/>
<line x1="495" y1="47" x2="495" y2="95" stroke="#cfcfcf" stroke-width="1.5" stroke-linecap="butt"/>
<line x1="720.5" y1="47" x2="720.5" y2="95" stroke="#cfcfcf" stroke-width="1.5" stroke-linecap="butt"/>
<polygon points="197.4,50.5 199.2,82.8 209.8,73.5 221,92.1 228.4,87.1 217.5,69.5 228,65.4" fill="#fff" stroke="#333" stroke-width="2.5" stroke-linejoin="round"/>
<rect x="243.7" y="45" width="52.1" height="52" rx="2" fill="#c6ddef" stroke="none" stroke-width="1"/>
<path d="M 266 73 C 266 70 258 66 257.5 59.5 A 11.8 11.8 0 1 1 280.8 59.5 C 280 66 273 70 273 73 C 273 78 276 80 282 81 C 287 82 287.5 86 286 87 L 252.5 87 C 251 86 251 82 256 81 C 262 80 266 78 266 73 Z" fill="#fff" stroke="#3d3d3d" stroke-width="2.3" stroke-linejoin="round" />
<line x1="252.5" y1="86" x2="286" y2="86" stroke="#b06060" stroke-width="1.5" stroke-linecap="butt"/>
<path d="M 254.5 88 L 284.5 88 L 284.5 90 Q 284.5 94 280 94 L 259 94 Q 254.5 94 254.5 90 Z" fill="#fff" stroke="#3d3d3d" stroke-width="2.3" stroke-linejoin="round" />
<polygon points="302.5,68.5 313.5,68.5 308,74.5" fill="#333" stroke="#333" stroke-width="0.5" stroke-linejoin="round"/>
<g transform="translate(349.6,70.4) rotate(-45)"><path d="M -11.5 -9.5 A 11.5 11.5 0 0 1 11.5 -9.5 L 11.5 17 Q 11.5 20 8.5 20 L -8.5 20 Q -11.5 20 -11.5 17 Z" fill="#fff" stroke="#3d3d3d" stroke-width="2.3"/><circle cx="0" cy="-10.5" r="4.3" fill="none" stroke="#3d3d3d" stroke-width="2.3"/><line x1="-5" y1="0" x2="-5" y2="13" stroke="#3d3d3d" stroke-width="2.2"/><line x1="0" y1="0" x2="0" y2="13" stroke="#3d3d3d" stroke-width="2.2"/><line x1="5" y1="0" x2="5" y2="13" stroke="#3d3d3d" stroke-width="2.2"/></g>
<polyline points="385,92 385,50 427.5,50 427.5,66 403,66 403,92 385,92" fill="none" stroke="#555" stroke-width="2" stroke-dasharray="2 3" stroke-linejoin="round"/>
<text x="413" y="65" font-family="Liberation Sans" font-size="12" fill="#444" text-anchor="start" font-weight="normal" >1</text>
<text x="389" y="90" font-family="Liberation Sans" font-size="12" fill="#444" text-anchor="start" font-weight="normal" >A</text>
<path d="M 447 50.6 L 478.9 50.6 Q 482.9 50.6 482.9 54.6 L 482.9 78.7 Q 482.9 82.7 478.9 82.7 L 458.3 82.7 L 448.6 90.9 L 448.6 82.7 L 446.7 82.7 Q 442.7 82.7 442.7 78.7 L 442.7 54.6 Q 442.7 50.6 446.7 50.6 Z" fill="#fff" stroke="#3d3d3d" stroke-width="2.3" stroke-linejoin="round" />
<line x1="452.3" y1="60.3" x2="473.2" y2="60.3" stroke="#3d3d3d" stroke-width="2.3" stroke-linecap="butt"/>
<line x1="452.3" y1="67" x2="473.2" y2="67" stroke="#3d3d3d" stroke-width="2.3" stroke-linecap="butt"/>
<line x1="452.3" y1="74" x2="473.2" y2="74" stroke="#3d3d3d" stroke-width="2.3" stroke-linecap="butt"/>
<polyline points="504.5,80.5 527.3,93.6 550,80.5" fill="none" stroke="#333" stroke-width="2.5" stroke-linejoin="round"/>
<polyline points="504.5,71 527.3,84 550,71" fill="none" stroke="#333" stroke-width="2.5" stroke-linejoin="round"/>
<polygon points="527.3,48.6 550,61.5 527.3,74.5 504.5,61.5" fill="#fff" stroke="#333" stroke-width="2.5" stroke-linejoin="round"/>
<polygon points="559.5,68 571,68 565.25,74.5" fill="#333" stroke="#333" stroke-width="0.5" stroke-linejoin="round"/>
<path d="M 607.6 50 A 18.5 18.5 0 0 0 607.6 87" fill="none" stroke="#0b6cc0" stroke-width="5" stroke-linejoin="round" />
<line x1="607.6" y1="47" x2="607.6" y2="95" stroke="#333" stroke-width="2.5" stroke-linecap="butt"/>
<polygon points="611,52 629,93 611,93" fill="none" stroke="#777" stroke-width="1.5" stroke-dasharray="1.5 2" stroke-linejoin="round"/>
<circle cx="614" cy="70" r="0.9" fill="#777" stroke="#747474" stroke-width="0"/>
<circle cx="617" cy="80" r="0.9" fill="#777" stroke="#747474" stroke-width="0"/>
<circle cx="621" cy="86" r="0.9" fill="#777" stroke="#747474" stroke-width="0"/>
<circle cx="614" cy="86" r="0.9" fill="#777" stroke="#747474" stroke-width="0"/>
<circle cx="618" cy="74" r="0.9" fill="#777" stroke="#747474" stroke-width="0"/>
<circle cx="624" cy="89" r="0.9" fill="#777" stroke="#747474" stroke-width="0"/>
<circle cx="613" cy="79" r="0.9" fill="#777" stroke="#747474" stroke-width="0"/>
<path d="M 646 51.4 L 682 51.4 Q 685 51.4 683.5 54.5 L 670 73 L 670 91.6 L 658.7 91.6 L 658.7 73 L 645 54.5 Q 643 51.4 646 51.4 Z" fill="#fff" stroke="#3d3d3d" stroke-width="2.5" stroke-linejoin="round" />
<polygon points="697,68 708,68 702.5,74.5" fill="#333" stroke="#333" stroke-width="0.5" stroke-linejoin="round"/>
<path d="M 745 78 L 745 57 Q 745 53 748 53 Q 751 53 751 57 L 751 52 Q 751 49 754 49 Q 757 49 757 52 L 757 56 Q 757 53 760 53 Q 763 53 763 56 L 763 60 Q 763 57 766 57 Q 769 57 769 60 L 769 80 Q 769 92 757 92 Q 750 92 745 86 L 737 78 Q 734 74 737 73 Q 740 72 745 78 Z" fill="#fff" stroke="#3d3d3d" stroke-width="2.3" stroke-linejoin="round" />
<line x1="751" y1="57" x2="751" y2="70" stroke="#3d3d3d" stroke-width="1.5" stroke-linecap="butt"/>
<line x1="757" y1="57" x2="757" y2="70" stroke="#3d3d3d" stroke-width="1.5" stroke-linecap="butt"/>
<line x1="763" y1="57" x2="763" y2="70" stroke="#3d3d3d" stroke-width="1.5" stroke-linecap="butt"/>
<circle cx="803.4" cy="65.5" r="13.6" fill="#fff" stroke="#333" stroke-width="2.8"/>
<line x1="813.19" y1="75.29" x2="828" y2="90" stroke="#333" stroke-width="2.8" stroke-linecap="butt"/>
<line x1="797" y1="65.5" x2="810" y2="65.5" stroke="#333" stroke-width="2.8" stroke-linecap="butt"/>
<line x1="803.4" y1="59" x2="803.4" y2="72" stroke="#333" stroke-width="2.8" stroke-linecap="butt"/>
<circle cx="859.7" cy="65.5" r="13.6" fill="#fff" stroke="#333" stroke-width="2.8"/>
<line x1="869.49" y1="75.29" x2="884" y2="90" stroke="#333" stroke-width="2.8" stroke-linecap="butt"/>
<line x1="853" y1="65.5" x2="866.5" y2="65.5" stroke="#333" stroke-width="2.8" stroke-linecap="butt"/>
<circle cx="916.3" cy="65.5" r="13.6" fill="#fff" stroke="#333" stroke-width="2.8"/>
<line x1="926.09" y1="75.29" x2="940.5" y2="90" stroke="#333" stroke-width="2.8" stroke-linecap="butt"/>
<polygon points="916.3,56.5 910.5,63 922,63" fill="#333" stroke="#333" stroke-width="0.5" stroke-linejoin="round"/>
<polygon points="910.5,68 922,68 916.3,74.5" fill="#333" stroke="#333" stroke-width="0.5" stroke-linejoin="round"/>
<polyline points="979,52.5 997.5,52.5 997.5,70 984,70" fill="none" stroke="#333" stroke-width="2.3" stroke-dasharray="3 2.5" stroke-linejoin="round"/>
<circle cx="972.5" cy="65.5" r="13.6" fill="#fff" stroke="#333" stroke-width="2.8"/>
<line x1="982.29" y1="75.29" x2="997" y2="90" stroke="#333" stroke-width="2.8" stroke-linecap="butt"/>
<circle cx="1034.4" cy="70.75" r="18.3" fill="none" stroke="#333" stroke-width="3"/>
<line x1="1025" y1="70.75" x2="1043.8" y2="70.75" stroke="#333" stroke-width="3" stroke-linecap="butt"/>
<line x1="1034.4" y1="61.5" x2="1034.4" y2="80" stroke="#333" stroke-width="3" stroke-linecap="butt"/>
<circle cx="1090.8" cy="70.75" r="18.3" fill="none" stroke="#333" stroke-width="3"/>
<line x1="1081.5" y1="70.75" x2="1100" y2="70.75" stroke="#333" stroke-width="3" stroke-linecap="butt"/>
<polygon points="1124,47.7 1137.5,47.7 1124,61.2" fill="#555" stroke="#555" stroke-width="0.5" stroke-linejoin="round"/>
<polygon points="1171,47.7 1157.5,47.7 1171,61.2" fill="#555" stroke="#555" stroke-width="0.5" stroke-linejoin="round"/>
<polygon points="1124,94.6 1137.5,94.6 1124,81.1" fill="#555" stroke="#555" stroke-width="0.5" stroke-linejoin="round"/>
<polygon points="1171,94.6 1157.5,94.6 1171,81.1" fill="#555" stroke="#555" stroke-width="0.5" stroke-linejoin="round"/>
<circle cx="1143.4" cy="67" r="10" fill="none" stroke="#333" stroke-width="2.2"/>
<line x1="1150.5" y1="74" x2="1161.3" y2="85" stroke="#333" stroke-width="2.2" stroke-linecap="butt"/>
<polygon points="1190.4,65.5 1185,71.5 1190.4,77.5" fill="#444" stroke="#444" stroke-width="0.5" stroke-linejoin="round"/>
<path d="M 8.5 905 L 8.5 114.5 Q 8.5 110.5 12.5 110.5 L 294 110.5 Q 298 110.5 298 114.5 L 298 152" fill="none" stroke="#b8b8b8" stroke-width="1.6" stroke-linejoin="round" />
<path d="M 298 152 L 1495 152 Q 1499.3 152 1499.3 156 L 1499.3 905" fill="none" stroke="#bdbdbd" stroke-width="1.6" stroke-linejoin="round" />
<path d="M 21 118.5 L 33 118.5 L 38.5 124 L 38.5 142 L 21 142 Z" fill="#fff" stroke="#555" stroke-width="1.8" stroke-linejoin="round" />
<path d="M 33 118.5 L 33 124 L 38.5 124" fill="none" stroke="#777" stroke-width="1.5" stroke-linejoin="round" />
<text x="45" y="139" font-family="Liberation Sans" font-size="21.5" fill="#111" text-anchor="start" font-weight="bold" textLength="217.5" lengthAdjust="spacingAndGlyphs">930-1200-406-V1.dwg</text>
<line x1="274" y1="124.5" x2="285" y2="136" stroke="#222" stroke-width="2.4" stroke-linecap="butt"/>
<line x1="285" y1="124.5" x2="274" y2="136" stroke="#222" stroke-width="2.4" stroke-linecap="butt"/>
<line x1="1479" y1="125.5" x2="1491" y2="125.5" stroke="#111" stroke-width="2" stroke-linecap="butt"/>
<polygon points="1478.5,129.5 1491.5,129.5 1485,137" fill="#111" stroke="#111" stroke-width="0.5" stroke-linejoin="round"/>
<path d="M 1510.7 905 L 1510.7 114.5 Q 1510.7 110.5 1514.7 110.5 L 2014 110.5" fill="none" stroke="#b8b8b8" stroke-width="1.6" stroke-linejoin="round" />
<text x="1515" y="134" font-family="Liberation Sans" font-size="19.5" fill="#222" text-anchor="start" font-weight="normal" stroke="#222" stroke-width="0.45" >特性</text>
<polygon points="1977,125 1990,125 1983.5,132.5" fill="#111" stroke="#111" stroke-width="0.5" stroke-linejoin="round"/>
<text x="2006" y="134" font-family="Liberation Sans" font-size="19.5" fill="#222" text-anchor="start" font-weight="normal" stroke="#222" stroke-width="0.5">中</text>
<text x="1530.5" y="180" font-family="Liberation Sans" font-size="19.5" fill="#222" text-anchor="start" font-weight="normal" stroke="#222" stroke-width="0.45" >开始:</text>
<rect x="1590.5" y="155.5" width="63.5" height="34.3" rx="5" fill="#fff" stroke="#b5b5b5" stroke-width="1.6"/>
<text x="1598.5" y="180.5" font-family="Liberation Sans" font-size="20" fill="#222" text-anchor="start" font-weight="normal" >27</text>
<line x1="1666.6" y1="157.6" x2="1666.6" y2="187.8" stroke="#d0d0d0" stroke-width="1.5" stroke-linecap="butt"/>
<path d="M 1686 175 L 1686 161 Q 1686 157 1689 157 Q 1692 157 1692 161 L 1692 170 Q 1693 167 1696 168 Q 1699 169 1699 172 Q 1700 170 1702 171 Q 1705 172 1705 176 L 1705 181 Q 1705 189 1697 189 L 1693 189 Q 1688 189 1685 185 L 1678 178 Q 1676 175 1679 174 Q 1682 173 1686 177 Z" fill="#fff" stroke="#444" stroke-width="2" stroke-linejoin="round" />
<path d="M 1722 163 A 13 13 0 1 1 1719 181" fill="none" stroke="#444" stroke-width="3.2" stroke-linejoin="round" />
<polygon points="1715.5,177 1727,182 1717,188.5" fill="#444" stroke="#444" stroke-width="0.5" stroke-linejoin="round"/>
<circle cx="1730.8" cy="172.3" r="3.6" fill="#0b68c0" stroke="#747474" stroke-width="0"/>
<polyline points="1756,158.5 1786,158.5 1757.5,186 1780,186" fill="none" stroke="#444" stroke-width="3.4" stroke-linejoin="round"/>
<polygon points="1778,180 1788,186 1778,192" fill="#444" stroke="#444" stroke-width="0.5" stroke-linejoin="round"/>
<line x1="1800.5" y1="157" x2="1800.5" y2="186" stroke="#444" stroke-width="2.6" stroke-linecap="butt"/>
<polygon points="1795,180 1806.7,180 1800.8,189.5" fill="#444" stroke="#444" stroke-width="0.5" stroke-linejoin="round"/>
<line x1="1812" y1="158.6" x2="1826" y2="158.6" stroke="#0b6cc0" stroke-width="5" stroke-linecap="round"/>
<line x1="1812" y1="168" x2="1826" y2="168" stroke="#0b6cc0" stroke-width="5" stroke-linecap="round"/>
<line x1="1812" y1="177" x2="1826" y2="177" stroke="#0b6cc0" stroke-width="5" stroke-linecap="round"/>
<line x1="1812" y1="185.8" x2="1826" y2="185.8" stroke="#0b6cc0" stroke-width="5" stroke-linecap="round"/>
<line x1="1836" y1="157" x2="1836" y2="187" stroke="#d0d0d0" stroke-width="1.5" stroke-linecap="butt"/>
<line x1="1859.7" y1="166" x2="1859.7" y2="177.6" stroke="#444" stroke-width="2.6" stroke-linecap="butt"/>
<polygon points="1853.6,167 1865.8,167 1859.7,158.6" fill="#444" stroke="#444" stroke-width="0.5" stroke-linejoin="round"/>
<line x1="1848" y1="184.5" x2="1872" y2="184.5" stroke="#0b6cc0" stroke-width="6" stroke-linecap="round"/>
<line x1="1888.5" y1="161.3" x2="1912" y2="161.3" stroke="#0b6cc0" stroke-width="6" stroke-linecap="round"/>
<line x1="1899.9" y1="165" x2="1899.9" y2="179" stroke="#444" stroke-width="2.6" stroke-linecap="butt"/>
<polygon points="1893.8,178 1906,178 1899.9,187.5" fill="#444" stroke="#444" stroke-width="0.5" stroke-linejoin="round"/>
<text x="1999.5" y="180" font-family="Liberation Sans" font-size="19" fill="#111" text-anchor="start" font-weight="bold" stroke="#111" stroke-width="0.9">Σ</text>
<line x1="1523.5" y1="201.7" x2="1523.5" y2="905" stroke="#a4acb6" stroke-width="1.8" stroke-linecap="butt"/>
<line x1="1523.5" y1="201.7" x2="2014" y2="201.7" stroke="#a4acb6" stroke-width="1.8" stroke-linecap="butt"/>
<rect x="1524.5" y="202.6" width="490" height="33.5" rx="0" fill="url(#hdr)" stroke="none" stroke-width="1"/>
<line x1="1530" y1="236" x2="2014" y2="236" stroke="#e4e4e4" stroke-width="1.5" stroke-linecap="butt"/>
<line x1="1593.2" y1="205" x2="1593.2" y2="235" stroke="#ececec" stroke-width="1.2" stroke-linecap="butt"/>
<line x1="1682" y1="205" x2="1682" y2="235" stroke="#ececec" stroke-width="1.2" stroke-linecap="butt"/>
<line x1="1923" y1="205" x2="1923" y2="235" stroke="#ececec" stroke-width="1.2" stroke-linecap="butt"/>
<text x="1604" y="228" font-family="Liberation Sans" font-size="19" fill="#222" text-anchor="start" font-weight="normal" stroke="#222" stroke-width="0.4" >序号</text>
<text x="1693" y="228" font-family="Liberation Sans" font-size="19" fill="#222" text-anchor="start" font-weight="normal" stroke="#222" stroke-width="0.4" >标题</text>
<text x="1927" y="228" font-family="Liberation Sans" font-size="19" fill="#222" text-anchor="start" font-weight="normal" stroke="#222" stroke-width="0.4" >名义值</text>
<rect x="1524.5" y="304.1" width="490" height="32.6" rx="0" fill="url(#sel)" stroke="none" stroke-width="1"/>
<line x1="1524.5" y1="304.6" x2="2014" y2="304.6" stroke="#e4f1fb" stroke-width="1" stroke-linecap="butt"/>
<text x="1582.5" y="260.7" font-family="Liberation Sans" font-size="19" fill="#b4b4b4" text-anchor="end" font-weight="normal" >1</text>
<text x="1671.5" y="260.7" font-family="Liberation Sans" font-size="19" fill="#1a1a1a" text-anchor="end" font-weight="normal" >1</text>
<text x="1692.5" y="260.7" font-family="Liberation Sans" font-size="19" fill="#1a1a1a" text-anchor="start" font-weight="normal" stroke="#1a1a1a" stroke-width="0.25" >径向跳动 <tspan font-size="15">↗</tspan> 0.05 A</text>
<text x="1582.5" y="294.38" font-family="Liberation Sans" font-size="19" fill="#b4b4b4" text-anchor="end" font-weight="normal" >2</text>
<text x="1671.5" y="294.38" font-family="Liberation Sans" font-size="19" fill="#1a1a1a" text-anchor="end" font-weight="normal" >2</text>
<text x="1692.5" y="294.38" font-family="Liberation Sans" font-size="19" fill="#1a1a1a" text-anchor="start" font-weight="normal" stroke="#1a1a1a" stroke-width="0.25" >直径 <tspan font-size="23" dy="1">⌀</tspan><tspan dy="-1"> </tspan>55</text>
<text x="2016.5" y="294.38" font-family="Liberation Sans" font-size="19" fill="#1a1a1a" text-anchor="end" font-weight="normal" >55</text>
<text x="1582.5" y="328.06" font-family="Liberation Sans" font-size="19" fill="#b4b4b4" text-anchor="end" font-weight="normal" >3</text>
<text x="1671.5" y="328.06" font-family="Liberation Sans" font-size="19" fill="#1a1a1a" text-anchor="end" font-weight="normal" >3</text>
<text x="1692.5" y="328.06" font-family="Liberation Sans" font-size="19" fill="#1a1a1a" text-anchor="start" font-weight="normal" stroke="#1a1a1a" stroke-width="0.25" >长度 11.3</text>
<text x="2016.5" y="328.06" font-family="Liberation Sans" font-size="19" fill="#1a1a1a" text-anchor="end" font-weight="normal" >11.3</text>
<text x="1582.5" y="361.74" font-family="Liberation Sans" font-size="19" fill="#b4b4b4" text-anchor="end" font-weight="normal" >4</text>
<text x="1671.5" y="361.74" font-family="Liberation Sans" font-size="19" fill="#1a1a1a" text-anchor="end" font-weight="normal" >4</text>
<text x="1692.5" y="361.74" font-family="Liberation Sans" font-size="19" fill="#1a1a1a" text-anchor="start" font-weight="normal" stroke="#1a1a1a" stroke-width="0.25" >粗糙度Rz 2.5</text>
<text x="1582.5" y="395.42" font-family="Liberation Sans" font-size="19" fill="#b4b4b4" text-anchor="end" font-weight="normal" >5</text>
<text x="1671.5" y="395.42" font-family="Liberation Sans" font-size="19" fill="#1a1a1a" text-anchor="end" font-weight="normal" >5</text>
<text x="1692.5" y="395.42" font-family="Liberation Sans" font-size="19" fill="#1a1a1a" text-anchor="start" font-weight="normal" stroke="#1a1a1a" stroke-width="0.25" >螺纹 M36x1.5</text>
<text x="1582.5" y="429.1" font-family="Liberation Sans" font-size="19" fill="#b4b4b4" text-anchor="end" font-weight="normal" >6</text>
<text x="1671.5" y="429.1" font-family="Liberation Sans" font-size="19" fill="#1a1a1a" text-anchor="end" font-weight="normal" >6</text>
<text x="1692.5" y="429.1" font-family="Liberation Sans" font-size="19" fill="#1a1a1a" text-anchor="start" font-weight="normal" stroke="#1a1a1a" stroke-width="0.25" >长度 4.9</text>
<text x="2016.5" y="429.1" font-family="Liberation Sans" font-size="19" fill="#1a1a1a" text-anchor="end" font-weight="normal" >4.9</text>
<text x="1582.5" y="462.78" font-family="Liberation Sans" font-size="19" fill="#b4b4b4" text-anchor="end" font-weight="normal" >7</text>
<text x="1671.5" y="462.78" font-family="Liberation Sans" font-size="19" fill="#1a1a1a" text-anchor="end" font-weight="normal" >7</text>
<text x="1692.5" y="462.78" font-family="Liberation Sans" font-size="19" fill="#1a1a1a" text-anchor="start" font-weight="normal" stroke="#1a1a1a" stroke-width="0.25" >长度 35.2</text>
<text x="2016.5" y="462.78" font-family="Liberation Sans" font-size="19" fill="#1a1a1a" text-anchor="end" font-weight="normal" >35.2</text>
<text x="1582.5" y="496.46" font-family="Liberation Sans" font-size="19" fill="#b4b4b4" text-anchor="end" font-weight="normal" >8</text>
<text x="1671.5" y="496.46" font-family="Liberation Sans" font-size="19" fill="#1a1a1a" text-anchor="end" font-weight="normal" >8</text>
<text x="1692.5" y="496.46" font-family="Liberation Sans" font-size="19" fill="#1a1a1a" text-anchor="start" font-weight="normal" stroke="#1a1a1a" stroke-width="0.25" >长度 22.4</text>
<text x="2016.5" y="496.46" font-family="Liberation Sans" font-size="19" fill="#1a1a1a" text-anchor="end" font-weight="normal" >22.4</text>
<text x="1582.5" y="530.14" font-family="Liberation Sans" font-size="19" fill="#b4b4b4" text-anchor="end" font-weight="normal" >9</text>
<text x="1671.5" y="530.14" font-family="Liberation Sans" font-size="19" fill="#1a1a1a" text-anchor="end" font-weight="normal" >9</text>
<text x="1692.5" y="530.14" font-family="Liberation Sans" font-size="19" fill="#1a1a1a" text-anchor="start" font-weight="normal" stroke="#1a1a1a" stroke-width="0.25" >角度 20</text>
<text x="2016.5" y="530.14" font-family="Liberation Sans" font-size="19" fill="#1a1a1a" text-anchor="end" font-weight="normal" >20</text>
<text x="1582.5" y="563.82" font-family="Liberation Sans" font-size="19" fill="#b4b4b4" text-anchor="end" font-weight="normal" >10</text>
<text x="1671.5" y="563.82" font-family="Liberation Sans" font-size="19" fill="#1a1a1a" text-anchor="end" font-weight="normal" >10</text>
<text x="1692.5" y="563.82" font-family="Liberation Sans" font-size="19" fill="#1a1a1a" text-anchor="start" font-weight="normal" stroke="#1a1a1a" stroke-width="0.25" >长度 74.2</text>
<text x="2016.5" y="563.82" font-family="Liberation Sans" font-size="19" fill="#1a1a1a" text-anchor="end" font-weight="normal" >74.2</text>
<text x="1582.5" y="597.5" font-family="Liberation Sans" font-size="19" fill="#b4b4b4" text-anchor="end" font-weight="normal" >11</text>
<text x="1671.5" y="597.5" font-family="Liberation Sans" font-size="19" fill="#1a1a1a" text-anchor="end" font-weight="normal" >11</text>
<text x="1692.5" y="597.5" font-family="Liberation Sans" font-size="19" fill="#1a1a1a" text-anchor="start" font-weight="normal" stroke="#1a1a1a" stroke-width="0.25" >直径 <tspan font-size="23" dy="1">⌀</tspan><tspan dy="-1"> </tspan>44.6</text>
<text x="2016.5" y="597.5" font-family="Liberation Sans" font-size="19" fill="#1a1a1a" text-anchor="end" font-weight="normal" >44.6</text>
<text x="1582.5" y="631.18" font-family="Liberation Sans" font-size="19" fill="#b4b4b4" text-anchor="end" font-weight="normal" >12</text>
<text x="1671.5" y="631.18" font-family="Liberation Sans" font-size="19" fill="#1a1a1a" text-anchor="end" font-weight="normal" >12</text>
<text x="1692.5" y="631.18" font-family="Liberation Sans" font-size="19" fill="#1a1a1a" text-anchor="start" font-weight="normal" stroke="#1a1a1a" stroke-width="0.25" >直径 <tspan font-size="23" dy="1">⌀</tspan><tspan dy="-1"> </tspan>78.5</text>
<text x="2016.5" y="631.18" font-family="Liberation Sans" font-size="19" fill="#1a1a1a" text-anchor="end" font-weight="normal" >78.5</text>
<text x="1582.5" y="664.86" font-family="Liberation Sans" font-size="19" fill="#b4b4b4" text-anchor="end" font-weight="normal" >13</text>
<text x="1671.5" y="664.86" font-family="Liberation Sans" font-size="19" fill="#1a1a1a" text-anchor="end" font-weight="normal" >13</text>
<text x="1692.5" y="664.86" font-family="Liberation Sans" font-size="19" fill="#1a1a1a" text-anchor="start" font-weight="normal" stroke="#1a1a1a" stroke-width="0.25" >直径 <tspan font-size="23" dy="1">⌀</tspan><tspan dy="-1"> </tspan>40</text>
<text x="2016.5" y="664.86" font-family="Liberation Sans" font-size="19" fill="#1a1a1a" text-anchor="end" font-weight="normal" >40</text>
<text x="1582.5" y="698.54" font-family="Liberation Sans" font-size="19" fill="#b4b4b4" text-anchor="end" font-weight="normal" >14</text>
<text x="1671.5" y="698.54" font-family="Liberation Sans" font-size="19" fill="#1a1a1a" text-anchor="end" font-weight="normal" >14</text>
<text x="1692.5" y="698.54" font-family="Liberation Sans" font-size="19" fill="#1a1a1a" text-anchor="start" font-weight="normal" stroke="#1a1a1a" stroke-width="0.25" >长度 10</text>
<text x="2016.5" y="698.54" font-family="Liberation Sans" font-size="19" fill="#1a1a1a" text-anchor="end" font-weight="normal" >10</text>
<text x="1582.5" y="732.22" font-family="Liberation Sans" font-size="19" fill="#b4b4b4" text-anchor="end" font-weight="normal" >15</text>
<text x="1671.5" y="732.22" font-family="Liberation Sans" font-size="19" fill="#1a1a1a" text-anchor="end" font-weight="normal" >15</text>
<text x="1692.5" y="732.22" font-family="Liberation Sans" font-size="19" fill="#1a1a1a" text-anchor="start" font-weight="normal" stroke="#1a1a1a" stroke-width="0.25" >角度 135</text>
<text x="2016.5" y="732.22" font-family="Liberation Sans" font-size="19" fill="#1a1a1a" text-anchor="end" font-weight="normal" >135</text>
<text x="1582.5" y="765.9" font-family="Liberation Sans" font-size="19" fill="#b4b4b4" text-anchor="end" font-weight="normal" >16</text>
<text x="1671.5" y="765.9" font-family="Liberation Sans" font-size="19" fill="#1a1a1a" text-anchor="end" font-weight="normal" >16</text>
<text x="1692.5" y="765.9" font-family="Liberation Sans" font-size="19" fill="#1a1a1a" text-anchor="start" font-weight="normal" stroke="#1a1a1a" stroke-width="0.25" >直径 <tspan font-size="23" dy="1">⌀</tspan><tspan dy="-1"> </tspan>60</text>
<text x="2016.5" y="765.9" font-family="Liberation Sans" font-size="19" fill="#1a1a1a" text-anchor="end" font-weight="normal" >60</text>
<text x="1582.5" y="799.58" font-family="Liberation Sans" font-size="19" fill="#b4b4b4" text-anchor="end" font-weight="normal" >17</text>
<text x="1671.5" y="799.58" font-family="Liberation Sans" font-size="19" fill="#1a1a1a" text-anchor="end" font-weight="normal" >17</text>
<text x="1692.5" y="799.58" font-family="Liberation Sans" font-size="19" fill="#1a1a1a" text-anchor="start" font-weight="normal" stroke="#1a1a1a" stroke-width="0.25" >直径 <tspan font-size="23" dy="1">⌀</tspan><tspan dy="-1"> </tspan>70</text>
<text x="2016.5" y="799.58" font-family="Liberation Sans" font-size="19" fill="#1a1a1a" text-anchor="end" font-weight="normal" >70</text>
<text x="1582.5" y="833.26" font-family="Liberation Sans" font-size="19" fill="#b4b4b4" text-anchor="end" font-weight="normal" >18</text>
<text x="1671.5" y="833.26" font-family="Liberation Sans" font-size="19" fill="#1a1a1a" text-anchor="end" font-weight="normal" >18</text>
<text x="1692.5" y="833.26" font-family="Liberation Sans" font-size="19" fill="#1a1a1a" text-anchor="start" font-weight="normal" stroke="#1a1a1a" stroke-width="0.25" >长度 28</text>
<text x="2016.5" y="833.26" font-family="Liberation Sans" font-size="19" fill="#1a1a1a" text-anchor="end" font-weight="normal" >28</text>
<text x="1582.5" y="866.94" font-family="Liberation Sans" font-size="19" fill="#b4b4b4" text-anchor="end" font-weight="normal" >19</text>
<text x="1671.5" y="866.94" font-family="Liberation Sans" font-size="19" fill="#1a1a1a" text-anchor="end" font-weight="normal" >19</text>
<text x="1692.5" y="866.94" font-family="Liberation Sans" font-size="19" fill="#1a1a1a" text-anchor="start" font-weight="normal" stroke="#1a1a1a" stroke-width="0.25" >倒角 2</text>
<text x="2016.5" y="866.94" font-family="Liberation Sans" font-size="19" fill="#1a1a1a" text-anchor="end" font-weight="normal" >2</text>
<text x="1582.5" y="900.62" font-family="Liberation Sans" font-size="19" fill="#b4b4b4" text-anchor="end" font-weight="normal" >20</text>
<text x="1671.5" y="900.62" font-family="Liberation Sans" font-size="19" fill="#1a1a1a" text-anchor="end" font-weight="normal" >20</text>
<text x="1692.5" y="900.62" font-family="Liberation Sans" font-size="19" fill="#1a1a1a" text-anchor="start" font-weight="normal" stroke="#1a1a1a" stroke-width="0.25" >半径 R 3 max.</text>
<polygon points="1899.7,510.7 1913,534.7 1886.5,534.7" fill="#ecc81c" stroke="#e6c41a" stroke-width="1" stroke-linejoin="round"/>
<line x1="1899.7" y1="518.2" x2="1899.7" y2="527.2" stroke="#fff3a0" stroke-width="2.4" stroke-linecap="butt"/>
<circle cx="1899.7" cy="531.2" r="1.3" fill="#fff3a0" stroke="#747474" stroke-width="0"/>
<polygon points="1899.7,712.8 1913,736.8 1886.5,736.8" fill="#ecc81c" stroke="#e6c41a" stroke-width="1" stroke-linejoin="round"/>
<line x1="1899.7" y1="720.3" x2="1899.7" y2="729.3" stroke="#fff3a0" stroke-width="2.4" stroke-linecap="butt"/>
<circle cx="1899.7" cy="733.3" r="1.3" fill="#fff3a0" stroke="#747474" stroke-width="0"/>
<rect x="2010" y="465" width="6" height="82.5" rx="3" fill="#9a9a9a" stroke="none" stroke-width="1"/>
<polygon points="1625,343 1625,369 1631,363 1635,372 1639,370 1635,361 1643,361" fill="#fff" stroke="#555" stroke-width="1.4" stroke-linejoin="round"/>
<polygon points="0,503 2.5,507 0,511" fill="#888" stroke="#888" stroke-width="0.5" stroke-linejoin="round"/>
<path d="M 12.5 905 L 12.5 707 Q 12.5 701 18.5 701 L 328.5 701 Q 334.5 701 334.5 707 L 334.5 905 Z" fill="#4a4a4a" stroke="none" stroke-width="0" stroke-linejoin="round" />
<clipPath id="pc"><rect x="12.5" y="701" width="322" height="204"/></clipPath>
<g clip-path="url(#pc)"><circle cx="406" cy="588.5" r="189.6" fill="none" stroke="#262626" stroke-width="1.6"/><circle cx="406" cy="588.5" r="168.6" fill="none" stroke="#262626" stroke-width="1.6"/></g>
<text x="28.5" y="740" font-family="Liberation Sans" font-size="22" fill="#fafafa" text-anchor="start" font-weight="bold" >带有气泡符标识的</text>
<polygon points="306.5,728.5 318.5,728.5 312.5,736" fill="#eee" stroke="#eee" stroke-width="0.5" stroke-linejoin="round"/>
<text x="29.3" y="774" font-family="Liberation Sans" font-size="19" fill="#e2e2e2" text-anchor="start" font-weight="bold" >前缀</text>
<rect x="29.3" y="787" width="289" height="26" rx="5" fill="#fff" stroke="none" stroke-width="1"/>
<text x="29.3" y="842" font-family="Liberation Sans" font-size="19" fill="#e2e2e2" text-anchor="start" font-weight="bold" >后缀</text>
<rect x="29.3" y="855.3" width="289" height="25.6" rx="5" fill="#fff" stroke="none" stroke-width="1"/>
<text x="29.3" y="910" font-family="Liberation Sans" font-size="19" fill="#e2e2e2" text-anchor="start" font-weight="bold" >目录</text>
<ellipse cx="265" cy="909" rx="9" ry="5" fill="#2f8f5a"/>
</svg>
</body></html>
